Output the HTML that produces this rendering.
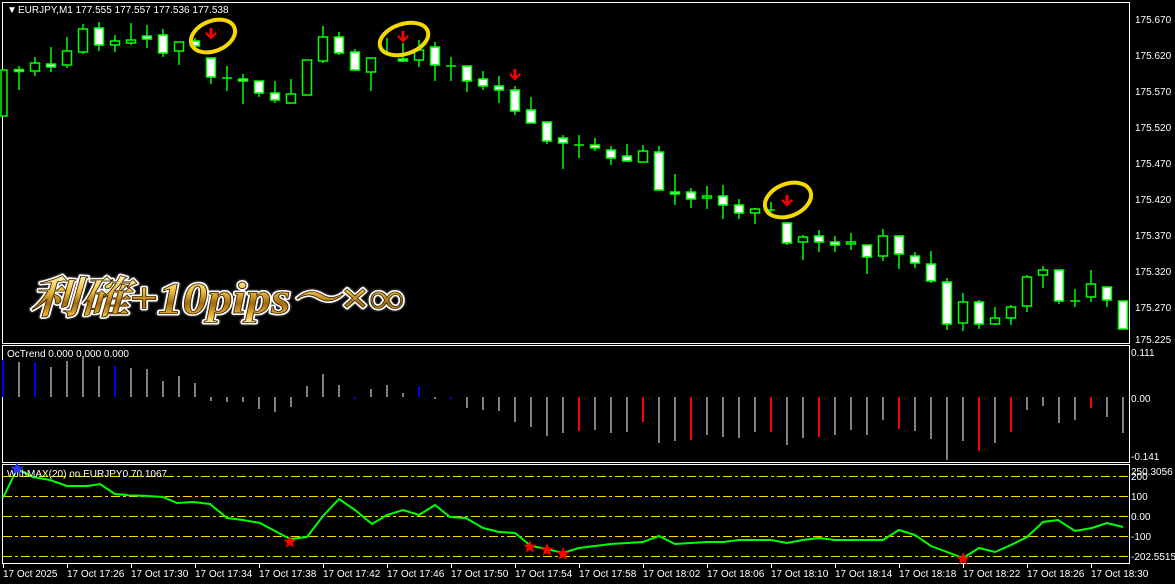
<!DOCTYPE html>
<html><head><meta charset="utf-8"><style>
html,body{margin:0;padding:0;background:#000;width:1175px;height:584px;overflow:hidden}
svg{display:block}
text{font-family:"Liberation Sans","DejaVu Sans",sans-serif;font-size:10px;fill:#fff}
</style></head><body>
<svg width="1175" height="584" viewBox="0 0 1175 584" xmlns="http://www.w3.org/2000/svg">
<defs>
<linearGradient id="gold" x1="0" y1="0" x2="0" y2="1">
<stop offset="0" stop-color="#fff6c0"/><stop offset="0.35" stop-color="#f0c040"/><stop offset="0.6" stop-color="#a06a10"/><stop offset="0.8" stop-color="#e0a830"/><stop offset="1" stop-color="#fff0a0"/>
</linearGradient>
</defs>
<rect width="1175" height="584" fill="#000"/>
<!-- panel borders -->
<g fill="none" stroke="#fff" stroke-width="1">
<rect x="2.5" y="2.5" width="1127" height="341"/>
<rect x="2.5" y="345.5" width="1127" height="117"/>
<rect x="2.5" y="464.5" width="1127" height="99"/>
</g>
<!-- price axis -->
<g>
<text x="1135" y="23">175.670</text><text x="1135" y="59">175.620</text><text x="1135" y="95">175.570</text><text x="1135" y="131">175.520</text><text x="1135" y="167">175.470</text><text x="1135" y="203">175.420</text><text x="1135" y="239">175.370</text><text x="1135" y="275">175.320</text><text x="1135" y="311">175.270</text><text x="1135" y="343">175.225</text>
<text x="1131" y="356">0.111</text><text x="1131" y="402">0.00</text><text x="1131" y="460">-0.141</text>
<text x="1131" y="475">250.3056</text><text x="1131" y="480">200</text><text x="1131" y="500">100</text><text x="1131" y="520">0.00</text><text x="1131" y="540">-100</text><text x="1131" y="560">-202.5515</text>
</g>
<text x="7" y="13">&#9660;</text>
<text x="18" y="13">EURJPY,M1  177.555 177.557 177.536 177.538</text>
<!-- candles -->
<g stroke="#00ff00" stroke-width="1.5" id="candles">
<!-- i0 -->
<line x1="3" y1="70" x2="3" y2="116"/><rect x="1" y="70" width="6" height="46" fill="#000"/>
<line x1="19" y1="66" x2="19" y2="90"/><rect x="14.5" y="69.5" width="9" height="2" fill="#fff"/>
<line x1="35" y1="57" x2="35" y2="76"/><rect x="30.5" y="63" width="9" height="8" fill="#000"/>
<line x1="51" y1="47" x2="51" y2="72"/><rect x="46.5" y="64" width="9" height="3" fill="#fff"/>
<line x1="67" y1="37" x2="67" y2="68"/><rect x="62.5" y="51" width="9" height="14" fill="#000"/>
<line x1="83" y1="24" x2="83" y2="54"/><rect x="78.5" y="29" width="9" height="23" fill="#000"/>
<line x1="99" y1="22" x2="99" y2="51"/><rect x="94.5" y="28" width="9" height="17" fill="#fff"/>
<line x1="115" y1="35" x2="115" y2="52"/><rect x="110.5" y="41" width="9" height="4" fill="#000"/>
<line x1="131" y1="23" x2="131" y2="45"/><rect x="126.5" y="40" width="9" height="3" fill="#000"/>
<line x1="147" y1="25" x2="147" y2="48"/><rect x="142.5" y="36" width="9" height="3" fill="#fff"/>
<line x1="163" y1="29" x2="163" y2="57"/><rect x="158.5" y="35" width="9" height="18" fill="#fff"/>
<line x1="179" y1="42" x2="179" y2="65"/><rect x="174.5" y="42" width="9" height="9" fill="#000"/>
<line x1="195" y1="38" x2="195" y2="47"/><rect x="190.5" y="41" width="9" height="5" fill="#fff"/>
<line x1="211" y1="58" x2="211" y2="84"/><rect x="206.5" y="58" width="9" height="19" fill="#fff"/>
<line x1="227" y1="66" x2="227" y2="91"/><line x1="222" y1="78" x2="232" y2="78"/>
<line x1="243" y1="74" x2="243" y2="104"/><rect x="238.5" y="79" width="9" height="2" fill="#fff"/>
<line x1="259" y1="81" x2="259" y2="97"/><rect x="254.5" y="81" width="9" height="12" fill="#fff"/>
<line x1="275" y1="81" x2="275" y2="103"/><rect x="270.5" y="93" width="9" height="7" fill="#fff"/>
<line x1="291" y1="79" x2="291" y2="104"/><rect x="286.5" y="94" width="9" height="9" fill="#000"/>
<line x1="307" y1="60" x2="307" y2="95"/><rect x="302.5" y="60" width="9" height="35" fill="#000"/>
<line x1="323" y1="26" x2="323" y2="63"/><rect x="318.5" y="37" width="9" height="24" fill="#000"/>
<line x1="339" y1="32" x2="339" y2="55"/><rect x="334.5" y="37" width="9" height="16" fill="#fff"/>
<line x1="355" y1="49" x2="355" y2="71"/><rect x="350.5" y="52" width="9" height="18" fill="#fff"/>
<line x1="371" y1="58" x2="371" y2="91"/><rect x="366.5" y="58" width="9" height="14" fill="#000"/>
<line x1="387" y1="38" x2="387" y2="52"/>
<line x1="403" y1="43" x2="403" y2="62"/><rect x="398.5" y="59" width="9" height="2" fill="#fff"/>
<line x1="419" y1="40" x2="419" y2="67"/><rect x="414.5" y="50" width="9" height="10" fill="#000"/>
<line x1="435" y1="42" x2="435" y2="81"/><rect x="430.5" y="47" width="9" height="18" fill="#fff"/>
<line x1="451" y1="57" x2="451" y2="81"/><line x1="446" y1="66" x2="456" y2="66"/>
<line x1="467" y1="66" x2="467" y2="92"/><rect x="462.5" y="66" width="9" height="15" fill="#fff"/>
<line x1="483" y1="71" x2="483" y2="90"/><rect x="478.5" y="79" width="9" height="7" fill="#fff"/>
<line x1="499" y1="76" x2="499" y2="103"/><rect x="494.5" y="86" width="9" height="4" fill="#fff"/>
<line x1="515" y1="86" x2="515" y2="115"/><rect x="510.5" y="90" width="9" height="21" fill="#fff"/>
<line x1="531" y1="97" x2="531" y2="123"/><rect x="526.5" y="110" width="9" height="13" fill="#fff"/>
<line x1="547" y1="122" x2="547" y2="144"/><rect x="542.5" y="122" width="9" height="19" fill="#fff"/>
<line x1="563" y1="135" x2="563" y2="169"/><rect x="558.5" y="138" width="9" height="5" fill="#fff"/>
<line x1="579" y1="135" x2="579" y2="158"/><line x1="574" y1="145" x2="584" y2="145"/>
<line x1="595" y1="138" x2="595" y2="151"/><rect x="590.5" y="145" width="9" height="3" fill="#fff"/>
<line x1="611" y1="146" x2="611" y2="165"/><rect x="606.5" y="150" width="9" height="8" fill="#fff"/>
<line x1="627" y1="144" x2="627" y2="162"/><rect x="622.5" y="156" width="9" height="5" fill="#fff"/>
<line x1="643" y1="145" x2="643" y2="162"/><rect x="638.5" y="151" width="9" height="11" fill="#000"/>
<line x1="659" y1="146" x2="659" y2="190"/><rect x="654.5" y="152" width="9" height="38" fill="#fff"/>
<line x1="675" y1="174" x2="675" y2="205"/><rect x="670.5" y="192" width="9" height="2" fill="#fff"/>
<line x1="691" y1="188" x2="691" y2="208"/><rect x="686.5" y="192" width="9" height="7" fill="#fff"/>
<line x1="707" y1="186" x2="707" y2="209"/><rect x="702.5" y="196" width="9" height="2" fill="#000"/>
<line x1="723" y1="185" x2="723" y2="219"/><rect x="718.5" y="196" width="9" height="9" fill="#fff"/>
<line x1="739" y1="199" x2="739" y2="219"/><rect x="734.5" y="205" width="9" height="8" fill="#fff"/>
<line x1="755" y1="208" x2="755" y2="224"/><rect x="750.5" y="209" width="9" height="4" fill="#000"/>
<line x1="771" y1="202" x2="771" y2="212"/><line x1="768" y1="210" x2="775" y2="210"/>
<line x1="787" y1="222" x2="787" y2="245"/><rect x="782.5" y="223" width="9" height="20" fill="#fff"/>
<line x1="803" y1="235" x2="803" y2="260"/><rect x="798.5" y="237" width="9" height="5" fill="#000"/>
<line x1="819" y1="230" x2="819" y2="252"/><rect x="814.5" y="236" width="9" height="6" fill="#fff"/>
<line x1="835" y1="236" x2="835" y2="252"/><rect x="830.5" y="242" width="9" height="3" fill="#fff"/>
<line x1="851" y1="233" x2="851" y2="250"/><rect x="846.5" y="242" width="9" height="2" fill="#000"/>
<line x1="867" y1="245" x2="867" y2="274"/><rect x="862.5" y="245" width="9" height="12" fill="#fff"/>
<line x1="883" y1="229" x2="883" y2="261"/><rect x="878.5" y="236" width="9" height="20" fill="#000"/>
<line x1="899" y1="235" x2="899" y2="269"/><rect x="894.5" y="236" width="9" height="18" fill="#fff"/>
<line x1="915" y1="252" x2="915" y2="268"/><rect x="910.5" y="256" width="9" height="7" fill="#fff"/>
<line x1="931" y1="251" x2="931" y2="283"/><rect x="926.5" y="264" width="9" height="17" fill="#fff"/>
<line x1="947" y1="278" x2="947" y2="330"/><rect x="942.5" y="282" width="9" height="42" fill="#fff"/>
<line x1="963" y1="293" x2="963" y2="331"/><rect x="958.5" y="302" width="9" height="21" fill="#000"/>
<line x1="979" y1="300" x2="979" y2="329"/><rect x="974.5" y="302" width="9" height="22" fill="#fff"/>
<line x1="995" y1="307" x2="995" y2="325"/><rect x="990.5" y="318" width="9" height="6" fill="#000"/>
<line x1="1011" y1="305" x2="1011" y2="325"/><rect x="1006.5" y="307" width="9" height="11" fill="#000"/>
<line x1="1027" y1="275" x2="1027" y2="312"/><rect x="1022.5" y="277" width="9" height="29" fill="#000"/>
<line x1="1043" y1="266" x2="1043" y2="288"/><rect x="1038.5" y="270" width="9" height="5" fill="#000"/>
<line x1="1059" y1="270" x2="1059" y2="304"/><rect x="1054.5" y="270" width="9" height="31" fill="#fff"/>
<line x1="1075" y1="289" x2="1075" y2="307"/><line x1="1070" y1="301" x2="1080" y2="301"/>
<line x1="1091" y1="270" x2="1091" y2="302"/><rect x="1086.5" y="284" width="9" height="13" fill="#000"/>
<line x1="1107" y1="287" x2="1107" y2="307"/><rect x="1102.5" y="287" width="9" height="13" fill="#fff"/>
<line x1="1123" y1="301" x2="1123" y2="329"/><rect x="1118.5" y="301" width="9" height="28" fill="#fff"/>
</g>
<!-- yellow circles -->
<g fill="none" stroke="#f5d800" stroke-width="4">
<ellipse cx="213" cy="36" rx="23" ry="15" transform="rotate(-22 213 36)"/>
<ellipse cx="404" cy="39" rx="25" ry="15" transform="rotate(-18 404 39)"/>
<ellipse cx="788" cy="200" rx="24" ry="16" transform="rotate(-22 788 200)"/>
</g>
<!-- red arrows -->
<g fill="#f00">
<path d="M209.5,28 h3 v7 l3,-3 l1.5,1.5 l-6,6 l-6,-6 l1.5,-1.5 l3,3z"/>
<path d="M401.5,31 h3 v7 l3,-3 l1.5,1.5 l-6,6 l-6,-6 l1.5,-1.5 l3,3z"/>
<path d="M513.5,69 h3 v7 l3,-3 l1.5,1.5 l-6,6 l-6,-6 l1.5,-1.5 l3,3z"/>
<path d="M785.5,195 h3 v7 l3,-3 l1.5,1.5 l-6,6 l-6,-6 l1.5,-1.5 l3,3z"/>
</g>
<!-- big text -->
<g font-family="'Liberation Serif','Noto Serif CJK JP',serif" font-weight="bold" font-style="italic" font-size="44">
<text x="30" y="313" textLength="374" lengthAdjust="spacingAndGlyphs" style="fill:none;stroke:#222;stroke-width:7;stroke-linejoin:round;font-family:'Liberation Serif','Noto Serif CJK JP',serif;font-size:44px">利確+10pips～×∞</text>
<text x="30" y="313" textLength="374" lengthAdjust="spacingAndGlyphs" style="fill:none;stroke:#fff;stroke-width:4;stroke-linejoin:round;font-family:'Liberation Serif','Noto Serif CJK JP',serif;font-size:44px">利確+10pips～×∞</text>
<text x="30" y="313" textLength="374" lengthAdjust="spacingAndGlyphs" style="fill:url(#gold);stroke:#3a2200;stroke-width:0.8;font-family:'Liberation Serif','Noto Serif CJK JP',serif;font-size:44px">利確+10pips～×∞</text>
</g>
<!-- OcTrend -->
<text x="7" y="357">OcTrend 0.000 0.000 0.000</text>
<g stroke-width="2">
<g stroke="#808080">
<line x1="19" y1="397" x2="19" y2="362"/><line x1="51" y1="397" x2="51" y2="367"/><line x1="67" y1="397" x2="67" y2="361"/><line x1="83" y1="397" x2="83" y2="357"/><line x1="99" y1="397" x2="99" y2="366"/><line x1="131" y1="397" x2="131" y2="368"/><line x1="147" y1="397" x2="147" y2="369"/><line x1="163" y1="397" x2="163" y2="381"/><line x1="179" y1="397" x2="179" y2="376"/><line x1="195" y1="397" x2="195" y2="383"/><line x1="211" y1="397" x2="211" y2="401"/><line x1="227" y1="397" x2="227" y2="402"/><line x1="243" y1="397" x2="243" y2="402"/><line x1="259" y1="397" x2="259" y2="409"/><line x1="275" y1="397" x2="275" y2="412"/><line x1="291" y1="397" x2="291" y2="407"/><line x1="307" y1="397" x2="307" y2="386"/><line x1="323" y1="397" x2="323" y2="374"/><line x1="339" y1="397" x2="339" y2="385"/><line x1="371" y1="397" x2="371" y2="389"/><line x1="387" y1="397" x2="387" y2="385"/><line x1="403" y1="397" x2="403" y2="393"/><line x1="435" y1="397" x2="435" y2="399"/>
<line x1="467" y1="397" x2="467" y2="408"/><line x1="483" y1="397" x2="483" y2="410"/><line x1="499" y1="397" x2="499" y2="411"/><line x1="515" y1="397" x2="515" y2="422"/><line x1="531" y1="397" x2="531" y2="427"/><line x1="547" y1="397" x2="547" y2="436"/><line x1="563" y1="397" x2="563" y2="433"/><line x1="595" y1="397" x2="595" y2="430"/><line x1="611" y1="397" x2="611" y2="433"/><line x1="627" y1="397" x2="627" y2="432"/><line x1="659" y1="397" x2="659" y2="443"/><line x1="675" y1="397" x2="675" y2="441"/><line x1="707" y1="397" x2="707" y2="435"/><line x1="723" y1="397" x2="723" y2="437"/><line x1="739" y1="397" x2="739" y2="438"/><line x1="755" y1="397" x2="755" y2="432"/><line x1="787" y1="397" x2="787" y2="445"/><line x1="803" y1="397" x2="803" y2="438"/><line x1="835" y1="397" x2="835" y2="435"/><line x1="851" y1="397" x2="851" y2="430"/><line x1="867" y1="397" x2="867" y2="435"/><line x1="883" y1="397" x2="883" y2="420"/><line x1="915" y1="397" x2="915" y2="431"/><line x1="931" y1="397" x2="931" y2="439"/><line x1="947" y1="397" x2="947" y2="460"/><line x1="963" y1="397" x2="963" y2="441"/><line x1="995" y1="397" x2="995" y2="443"/><line x1="1027" y1="397" x2="1027" y2="410"/><line x1="1043" y1="397" x2="1043" y2="406"/><line x1="1059" y1="397" x2="1059" y2="423"/><line x1="1075" y1="397" x2="1075" y2="420"/><line x1="1107" y1="397" x2="1107" y2="417"/><line x1="1123" y1="397" x2="1123" y2="433"/>
</g>
<g stroke="#0000ff">
<line x1="3" y1="397" x2="3" y2="360"/><line x1="35" y1="397" x2="35" y2="362"/><line x1="115" y1="397" x2="115" y2="366"/><line x1="355" y1="397" x2="355" y2="399"/><line x1="419" y1="397" x2="419" y2="386"/><line x1="451" y1="397" x2="451" y2="399"/>
</g>
<g stroke="#ff0000">
<line x1="579" y1="397" x2="579" y2="431"/><line x1="643" y1="397" x2="643" y2="422"/><line x1="691" y1="397" x2="691" y2="440"/><line x1="771" y1="397" x2="771" y2="432"/><line x1="819" y1="397" x2="819" y2="437"/><line x1="899" y1="397" x2="899" y2="429"/><line x1="979" y1="397" x2="979" y2="451"/><line x1="1011" y1="397" x2="1011" y2="432"/><line x1="1091" y1="397" x2="1091" y2="408"/>
</g>
</g>
<!-- WithMAX -->
<g stroke="#ffd700" stroke-width="1" stroke-dasharray="9 3 3 3">
<line x1="3" y1="476.5" x2="1129" y2="476.5"/><line x1="3" y1="496.5" x2="1129" y2="496.5"/><line x1="3" y1="516.5" x2="1129" y2="516.5"/><line x1="3" y1="536.5" x2="1129" y2="536.5"/><line x1="3" y1="556.5" x2="1129" y2="556.5"/>
</g>
<polyline fill="none" stroke="#00ff00" stroke-width="2" points="3,498 17,469 33,477 50,480 67,486 88,486 100,484 115,494 127,495 147,496 163,497 177,503 193,502 210,504 227,518 243,520 260,523 290,539 307,537 323,516 339,499 355,510 372,524 387,515 403,510 419,515 435,505 450,517 466,518 483,528 499,532 515,533 531,546 547,549 563,553 579,548 595,546 611,544 627,543 643,542 659,536 675,544 691,543 707,542 723,542 739,540 755,540 771,540 787,543 803,540 819,538 835,540 851,540 867,540 883,540 899,530 915,535 931,546 947,552 963,558 979,548 995,552 1011,545 1027,537 1043,522 1058,520 1075,531 1092,528 1107,523 1123,527"/>
<text x="7" y="477">WithMAX(20) on EURJPY0 70.1067</text>
<g>
<path fill="#3333ff" d="M17,462 l1.8,4.6 4.9,0.2 -3.8,3 1.3,4.8 -4.2,-2.7 -4.2,2.7 1.3,-4.8 -3.8,-3 4.9,-0.2z"/>
<path fill="#ff0000" d="M290,535 l1.8,4.6 4.9,0.2 -3.8,3 1.3,4.8 -4.2,-2.7 -4.2,2.7 1.3,-4.8 -3.8,-3 4.9,-0.2z"/>
<path fill="#ff0000" d="M530,540 l1.8,4.6 4.9,0.2 -3.8,3 1.3,4.8 -4.2,-2.7 -4.2,2.7 1.3,-4.8 -3.8,-3 4.9,-0.2z"/>
<path fill="#ff0000" d="M547,543 l1.8,4.6 4.9,0.2 -3.8,3 1.3,4.8 -4.2,-2.7 -4.2,2.7 1.3,-4.8 -3.8,-3 4.9,-0.2z"/>
<path fill="#ff0000" d="M563,547 l1.8,4.6 4.9,0.2 -3.8,3 1.3,4.8 -4.2,-2.7 -4.2,2.7 1.3,-4.8 -3.8,-3 4.9,-0.2z"/>
<path fill="#ff0000" d="M963,552 l1.8,4.6 4.9,0.2 -3.8,3 1.3,4.8 -4.2,-2.7 -4.2,2.7 1.3,-4.8 -3.8,-3 4.9,-0.2z"/>
</g>
<!-- time axis -->
<g stroke="#fff" stroke-width="1">
<line x1="3.5" y1="564" x2="3.5" y2="568"/><line x1="67.5" y1="564" x2="67.5" y2="568"/><line x1="131.5" y1="564" x2="131.5" y2="568"/><line x1="195.5" y1="564" x2="195.5" y2="568"/><line x1="259.5" y1="564" x2="259.5" y2="568"/><line x1="323.5" y1="564" x2="323.5" y2="568"/><line x1="387.5" y1="564" x2="387.5" y2="568"/><line x1="451.5" y1="564" x2="451.5" y2="568"/><line x1="515.5" y1="564" x2="515.5" y2="568"/><line x1="579.5" y1="564" x2="579.5" y2="568"/><line x1="643.5" y1="564" x2="643.5" y2="568"/><line x1="707.5" y1="564" x2="707.5" y2="568"/><line x1="771.5" y1="564" x2="771.5" y2="568"/><line x1="835.5" y1="564" x2="835.5" y2="568"/><line x1="899.5" y1="564" x2="899.5" y2="568"/><line x1="963.5" y1="564" x2="963.5" y2="568"/><line x1="1027.5" y1="564" x2="1027.5" y2="568"/><line x1="1091.5" y1="564" x2="1091.5" y2="568"/>
</g>
<g>
<text x="3" y="577">17 Oct 2025</text><text x="67" y="577">17 Oct 17:26</text><text x="131" y="577">17 Oct 17:30</text><text x="195" y="577">17 Oct 17:34</text><text x="259" y="577">17 Oct 17:38</text><text x="323" y="577">17 Oct 17:42</text><text x="387" y="577">17 Oct 17:46</text><text x="451" y="577">17 Oct 17:50</text><text x="515" y="577">17 Oct 17:54</text><text x="579" y="577">17 Oct 17:58</text><text x="643" y="577">17 Oct 18:02</text><text x="707" y="577">17 Oct 18:06</text><text x="771" y="577">17 Oct 18:10</text><text x="835" y="577">17 Oct 18:14</text><text x="899" y="577">17 Oct 18:18</text><text x="963" y="577">17 Oct 18:22</text><text x="1027" y="577">17 Oct 18:26</text><text x="1091" y="577">17 Oct 18:30</text>
</g>
</svg>
</body></html>
